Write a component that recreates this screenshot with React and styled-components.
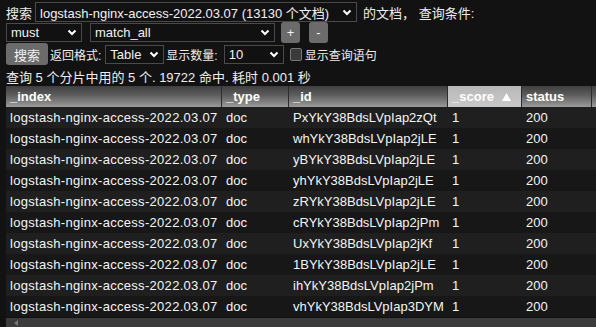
import React from 'react';
import styled, { createGlobalStyle } from 'styled-components';

const GlobalStyle = createGlobalStyle`
  html, body {
    margin: 0;
    background: #121212;
    color: #eee;
    font-family: "Liberation Sans", "Noto Sans CJK SC", sans-serif;
    font-size: 13px;
    overflow: hidden;
  }
`;

const Page = styled.div`
  width: 596px;
  height: 327px;
  overflow: hidden;
  padding: 2px 0 0 6px;
  box-sizing: border-box;
  display: flex;
  flex-direction: column;
`;

const Line = styled.div`
  display: flex;
  align-items: center;
  gap: ${p => p.gap ?? 4}px;
  height: ${p => p.h || 21}px;
  white-space: nowrap;
`;

const Label = styled.span`
  font-size: 12px;
  margin-left: ${p => p.ml || 0}px;
`;

const SelectBox = styled.div`
  width: ${p => p.w}px;
  height: ${p => p.h || 19}px;
  box-sizing: border-box;
  border: 1px solid #4a4a4a;
  background: #111;
  display: flex;
  align-items: center;
  justify-content: space-between;
  padding: 0 4px 0 4px;
  font-size: 13px;
  color: #f2f2f2;
  margin-left: ${p => p.ml || 0}px;
`;

const Chevron = () => (
  <svg width="10" height="7" viewBox="0 0 10 7">
    <path d="M1.5 1.5 L5 5 L8.5 1.5" stroke="#fff" strokeWidth="2" fill="none" />
  </svg>
);

const Select = ({ w, h, ml, children }) => (
  <SelectBox w={w} h={h} ml={ml}>
    <span>{children}</span>
    <Chevron />
  </SelectBox>
);

const Button = styled.div`
  width: ${p => p.w}px;
  height: ${p => p.h}px;
  border-radius: 3px;
  background: #6b6b6b;
  color: #f4f4f4;
  display: flex;
  align-items: center;
  justify-content: center;
  font-size: 13px;
  margin-left: ${p => p.ml || 0}px;
`;

const Check = styled.div`
  width: 10px;
  height: 11px;
  border: 1px solid #777;
  border-radius: 2px;
  background: #3a3a3a;
  margin-left: 6px;
`;

const Info = styled.div`
  height: 21px;
  display: flex;
  align-items: center;
  margin-top: 1px;
`;

const Table = styled.div`
  display: grid;
  grid-template-columns: 216px 67px 159px 74px 70px 10px;
  width: 600px;
`;

const Head = styled.div`
  height: 21px;
  display: flex;
  align-items: center;
  padding-left: 4px;
  font-weight: bold;
  font-size: 13px;
  color: #fff;
  border-right: 1px solid #2c2c2c;
  background: ${p => p.active
    ? 'linear-gradient(#b8b8b8, #c9c9c9)'
    : 'linear-gradient(#3f3f3f, #5a5a5a 40%, #9a9a9a)'};
  gap: 8px;
`;

const Cell = styled.div`
  height: 21px;
  display: flex;
  align-items: center;
  padding-left: 4px;
  background: ${p => (p.odd ? '#1f1f1f' : '#171717')};
  color: #f5f5f5;
  white-space: nowrap;
  overflow: hidden;
  letter-spacing: ${p => (p.wide ? '0.3px' : 'normal')};
`;

const Scrollbar = styled.div`
  height: 9px;
  background: #3b3b3b;
  margin-top: 1px;
  width: 590px;
  display: flex;
  align-items: center;
  padding-left: 8px;
`;

const ids = [
  'PxYkY38BdsLVpIap2zQt',
  'whYkY38BdsLVpIap2jLE',
  'yBYkY38BdsLVpIap2jLE',
  'yhYkY38BdsLVpIap2jLE',
  'zRYkY38BdsLVpIap2jLE',
  'cRYkY38BdsLVpIap2jPm',
  'UxYkY38BdsLVpIap2jKf',
  '1BYkY38BdsLVpIap2jLE',
  'ihYkY38BdsLVpIap2jPm',
  'vhYkY38BdsLVpIap3DYM',
];

export default function App() {
  return (
    <Page>
      <GlobalStyle />
      <Line gap={3}>
        <span>搜索</span>
        <Select w={322} h={20}>logstash-nginx-access-2022.03.07 (13130 个文档)</Select>
        <span style={{ marginLeft: 3 }}>的文档，&nbsp;查询条件:</span>
      </Line>
      <Line h={22}>
        <Select w={76}>must</Select>
        <Select w={185} ml={4}>match_all</Select>
        <Button w={19} h={21} ml={2}>+</Button>
        <Button w={19} h={21} ml={5}>-</Button>
      </Line>
      <Line h={22} gap={0}>
        <Button w={42} h={22}>搜索</Button>
        <Label ml={2}>返回格式:</Label>
        <Select w={59} ml={4}>Table</Select>
        <Label ml={2}>显示数量:</Label>
        <Select w={60} ml={6}>10</Select>
        <Check />
        <Label ml={3}>显示查询语句</Label>
      </Line>
      <Info>查询 5 个分片中用的 5 个. 19722 命中. 耗时 0.001 秒</Info>
      <Table>
        <Head>_index</Head>
        <Head>_type</Head>
        <Head>_id</Head>
        <Head active>
          _score
          <svg width="9" height="8" viewBox="0 0 9 8">
            <path d="M4.5 0 L9 8 L0 8 Z" fill="#fff" />
          </svg>
        </Head>
        <Head>status</Head>
        <Head />
        {ids.map((id, i) => (
          <React.Fragment key={id}>
            <Cell odd={i % 2 === 0} wide>logstash-nginx-access-2022.03.07</Cell>
            <Cell odd={i % 2 === 0}>doc</Cell>
            <Cell odd={i % 2 === 0}>{id}</Cell>
            <Cell odd={i % 2 === 0}>1</Cell>
            <Cell odd={i % 2 === 0}>200</Cell>
            <Cell odd={i % 2 === 0} />
          </React.Fragment>
        ))}
      </Table>
      <Scrollbar>
        <svg width="5" height="6" viewBox="0 0 5 6">
          <path d="M4 0 L0 3 L4 6 Z" fill="#777" />
        </svg>
      </Scrollbar>
    </Page>
  );
}
